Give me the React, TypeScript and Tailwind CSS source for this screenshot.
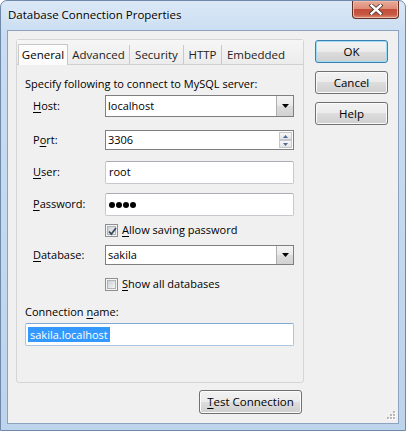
import React from "react";

function U({ children }: { children: React.ReactNode }) {
  return <span className="underline decoration-1 underline-offset-[2px]">{children}</span>;
}

function Btn({ children, def, className }: { children: React.ReactNode; def?: boolean; className?: string }) {
  return (
    <div
      className={
        "flex items-center justify-center rounded-[3px] border text-[11.5px] text-black " +
        (def
          ? "border-[#3c7fb1] shadow-[inset_0_0_0_1px_#9fdcf6] bg-[linear-gradient(#f2f2f2_0%,#ebebeb_50%,#dddddd_50%,#cfcfcf_100%)] "
          : "border-[#707070] shadow-[inset_0_0_0_1px_#fbfbfb] bg-[linear-gradient(#f2f2f2_0%,#ebebeb_50%,#dddddd_50%,#cfcfcf_100%)] ") +
        (className ?? "")
      }
    >
      {children}
    </div>
  );
}

function DropBtn() {
  return (
    <div className="flex h-full w-[17px] items-center justify-center border-l border-[#b0b0b0] bg-[linear-gradient(#f4f4f4_0%,#e9e9e9_50%,#dcdcdc_50%,#d2d2d2_100%)]">
      <svg width="7" height="4" viewBox="0 0 7 4">
        <path d="M0 0H7L3.5 4Z" fill="#000" />
      </svg>
    </div>
  );
}

function Check({ checked }: { checked?: boolean }) {
  return (
    <div className="relative flex h-[13px] w-[13px] items-center justify-center border border-[#8e8f8f] bg-[#f4f4f4]">
      <div className="h-[9px] w-[9px] border border-[#aeb3b9] bg-[linear-gradient(135deg,#cbcfd5,#f6f6f6)]" />
      {checked && (
        <svg className="absolute left-[1px] top-[1px]" width="11" height="11" viewBox="0 0 11 11">
          <path d="M2 5.5L4.3 8L9 2" stroke="#3c4a5e" strokeWidth="1.8" fill="none" />
        </svg>
      )}
    </div>
  );
}

function Row({ label, children, h, mt }: { label: React.ReactNode; children: React.ReactNode; h: string; mt: string }) {
  return (
    <div className={"flex items-center pl-[16px] " + h + " " + mt}>
      <div className="w-[72px] shrink-0">{label}</div>
      {children}
    </div>
  );
}

export default function App() {
  return (
    <div className="relative flex h-[431px] w-[406px] flex-col overflow-hidden rounded-t-[7px] border border-[#6f8aa8] bg-[linear-gradient(180deg,#dae8f7_0%,#c9dcf1_8%,#bed3ec_100%)] font-['Open_Sans',sans-serif] text-[11px] text-black">
      {/* title bar */}
      <div className="flex h-[29px] shrink-0 items-start justify-between pl-[7px] pr-[6px]">
        <div className="mt-[6px] text-[11.5px] leading-[16px] text-black [text-shadow:0_0_6px_#ffffff]">
          Database Connection Properties
        </div>
        <div className="flex h-[18px] w-[47px] items-center justify-center rounded-b-[4px] border border-t-0 border-[#5e3028] bg-[linear-gradient(#e9aa99_0%,#dc8c78_45%,#c44d38_50%,#c75a45_80%,#d98e6e_100%)] shadow-[inset_0_0_0_1px_#f0b8a8]">
          <svg width="14" height="11" viewBox="0 0 14 11">
            <path d="M2.5 1.5L11.5 9.5M11.5 1.5L2.5 9.5" stroke="#4a3430" strokeWidth="4" strokeLinecap="square" />
            <path d="M2.5 1.5L11.5 9.5M11.5 1.5L2.5 9.5" stroke="#ffffff" strokeWidth="2.4" strokeLinecap="square" />
          </svg>
        </div>
      </div>

      {/* client */}
      <div className="relative mx-[6px] mb-[6px] flex flex-1 flex-col border border-[#8ca3bf] bg-[#f0f0f0] pl-[8px] pt-[8px]">
        <div className="flex items-start gap-[11px]">
          {/* panel */}
          <div className="flex h-[344px] w-[288px] flex-col rounded-[3px] border border-[#d5d5d5]">
            <div className="flex h-[25px] items-end border-b border-[#d0d0d0] bg-[linear-gradient(#f6f6f6,#ececec)] pl-[1px] text-[11.5px]">
              <div className="relative -mb-px flex h-[21px] w-[50px] items-center justify-center border border-b-0 border-[#c8c8c8] bg-[#fcfcfc]">
                General
              </div>
              <div className="flex h-[19px] w-[62px] items-center justify-center border-r border-[#c9c9c9] text-[#222]">Advanced</div>
              <div className="flex h-[19px] w-[54px] items-center justify-center border-r border-[#c9c9c9] text-[#222]">Security</div>
              <div className="flex h-[19px] w-[38px] items-center justify-center border-r border-[#c9c9c9] text-[#222]">HTTP</div>
              <div className="flex h-[19px] w-[68px] items-center justify-center text-[#222]">Embedded</div>
            </div>

            <div className="mt-[11px] h-[16px] pl-[8px] leading-[16px]">Specify following to connect to MySQL server:</div>

            <Row label={<><U>H</U>ost:</>} h="h-[22px]" mt="mt-[3px]">
              <div className="flex h-full w-[189px] items-center border border-[#7f7f7f] bg-white">
                <div className="flex-1 pl-[2px]">localhost</div>
                <DropBtn />
              </div>
            </Row>

            <Row label={<>P<U>o</U>rt:</>} h="h-[20px]" mt="mt-[13px]">
              <div className="flex h-full w-[189px] items-center border border-[#7f7f7f] bg-white">
                <div className="flex-1 pl-[2px]">3306</div>
                <div className="mr-[1px] flex h-[16px] w-[13px] flex-col gap-[0px]">
                  <div className="flex h-[8px] items-center justify-center border border-[#c3c8d0] bg-[linear-gradient(#f7f7f7,#e3e3e3)]">
                    <svg width="5" height="3" viewBox="0 0 5 3"><path d="M0 3H5L2.5 0Z" fill="#4f6a94" /></svg>
                  </div>
                  <div className="flex h-[8px] items-center justify-center border border-[#c3c8d0] bg-[linear-gradient(#f7f7f7,#e3e3e3)]">
                    <svg width="5" height="3" viewBox="0 0 5 3"><path d="M0 0H5L2.5 3Z" fill="#4f6a94" /></svg>
                  </div>
                </div>
              </div>
            </Row>

            <Row label={<><U>U</U>ser:</>} h="h-[23px]" mt="mt-[11px]">
              <div className="flex h-full w-[189px] items-center rounded-[2px] border border-[#c6c9ce] border-t-[#abadb3] bg-white pl-[3px]">
                root
              </div>
            </Row>

            <Row label={<><U>P</U>assword:</>} h="h-[23px]" mt="mt-[9px]">
              <div className="flex h-full w-[189px] items-center gap-[1px] rounded-[2px] border border-[#c6c9ce] border-t-[#abadb3] bg-white pl-[3px]">
                <span className="h-[6px] w-[6px] rounded-full bg-black" />
                <span className="h-[6px] w-[6px] rounded-full bg-black" />
                <span className="h-[6px] w-[6px] rounded-full bg-black" />
                <span className="h-[6px] w-[6px] rounded-full bg-black" />
              </div>
            </Row>

            <div className="mt-[7px] flex h-[15px] items-center gap-[4px] pl-[88px]">
              <Check checked />
              <span><U>A</U>llow saving password</span>
            </div>

            <Row label={<><U>D</U>atabase:</>} h="h-[20px]" mt="mt-[7px]">
              <div className="flex h-full w-[189px] items-center border border-[#7f7f7f] bg-white">
                <div className="flex-1 pl-[2px]">sakila</div>
                <DropBtn />
              </div>
            </Row>

            <div className="mt-[12px] flex h-[15px] items-center gap-[4px] pl-[88px]">
              <Check />
              <span><U>S</U>how all databases</span>
            </div>

            <div className="mt-[12px] h-[16px] pl-[8px] leading-[16px]">
              Connection <U>n</U>ame:
            </div>

            <div className="ml-[8px] mt-[3px] flex h-[23px] w-[269px] items-center rounded-[2px] border border-[#a9c6e4] border-t-[#7eaad6] bg-white pl-[2px]">
              <span className="bg-[#3399ff] px-[2px] leading-[15px] text-white">sakila.localhost</span>
            </div>
          </div>

          {/* right buttons */}
          <div className="mt-[1px] flex flex-col gap-[8px]">
            <Btn def className="h-[23px] w-[73px]">OK</Btn>
            <Btn className="h-[23px] w-[73px]">Cancel</Btn>
            <Btn className="h-[23px] w-[73px]">Help</Btn>
          </div>
        </div>

        <div className="mt-[7px] flex w-[286px] justify-end">
          <Btn className="h-[24px] w-[103px]">
            <span><U>T</U>est Connection</span>
          </Btn>
        </div>

        <svg className="absolute bottom-[2px] right-[2px]" width="11" height="11" viewBox="0 0 11 11">
          {[
            [8, 1],
            [8, 4],
            [5, 4],
            [8, 7],
            [5, 7],
            [2, 7],
          ].map(([x, y], i) => (
            <g key={i}>
              <rect x={x + 1} y={y + 1} width="2" height="2" fill="#ffffff" />
              <rect x={x} y={y} width="2" height="2" fill="#b8b8b8" />
            </g>
          ))}
        </svg>
      </div>
    </div>
  );
}
